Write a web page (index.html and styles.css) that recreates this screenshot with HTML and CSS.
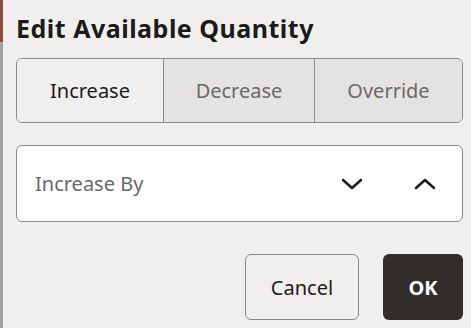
FILE: index.html
```html
<!DOCTYPE html>
<html>
<head>
<meta charset="utf-8">
<link rel="stylesheet" href="styles.css">
</head>
<body>
<div class="page">
  <div class="backdrop">
    <div class="bd-top"></div>
    <div class="bd-rest"></div>
  </div>
  <div class="dialog">
    <h1 class="title">Edit Available Quantity</h1>
    <div class="segmented">
      <button class="seg seg-on">Increase</button>
      <button class="seg">Decrease</button>
      <button class="seg">Override</button>
    </div>
    <div class="field">
      <span class="field-label">Increase By</span>
      <span class="steppers">
        <svg class="chev" width="22" height="14" viewBox="0 0 22 14"><path d="M2 3 L11 11 L20 3" fill="none" stroke="#1d1d1d" stroke-width="2.6" stroke-linecap="round" stroke-linejoin="round"/></svg>
        <svg class="chev" width="22" height="14" viewBox="0 0 22 14"><path d="M2 11 L11 3 L20 11" fill="none" stroke="#1d1d1d" stroke-width="2.6" stroke-linecap="round" stroke-linejoin="round"/></svg>
      </span>
    </div>
    <div class="actions">
      <button class="btn btn-cancel">Cancel</button>
      <button class="btn btn-ok">OK</button>
    </div>
  </div>
</div>
</body>
</html>
```

FILE: styles.css
```css
* { box-sizing: border-box; }
html, body { margin: 0; padding: 0; }
body {
  width: 471px;
  height: 328px;
  overflow: hidden;
  font-family: "Noto Sans", "Open Sans", sans-serif;
  background: #f1efed;
}
.page {
  display: flex;
  height: 328px;
}
.backdrop {
  width: 3px;
  display: flex;
  flex-direction: column;
}
.bd-top { height: 42px; background: #8a4a3c; }
.bd-rest { flex: 1; background: #a3a2a1; }
.dialog {
  flex: 1;
  background: #f1efed;
  padding: 12px 8px 0 13px;
  display: flex;
  flex-direction: column;
}
.title {
  margin: 0;
  font-size: 25px;
  font-weight: 700;
  color: #1b1b1b;
  line-height: 32px;
  letter-spacing: 0.5px;
}
.segmented {
  margin-top: 14px;
  display: flex;
  height: 65px;
  border: 1px solid #8c8b8a;
  border-radius: 6px;
  overflow: hidden;
}
.seg {
  font-family: inherit;
  font-size: 20px;
  border: none;
  background: #e4e3e1;
  color: #6a6967;
  margin: 0;
  padding: 0;
  flex: 0 0 auto;
}
.seg:nth-child(1) { width: 146px; }
.seg:nth-child(2) { width: 151px; border-left: 1px solid #8c8b8a; }
.seg:nth-child(3) { flex: 1; border-left: 1px solid #8c8b8a; }
.seg-on {
  background: #f1efed;
  color: #1b1b1b;
}
.field {
  margin-top: 22px;
  height: 77px;
  background: #ffffff;
  border: 1px solid #8c8b8a;
  border-radius: 6px;
  display: flex;
  align-items: center;
  padding: 0 26px 0 18px;
}
.field-label {
  flex: 1;
  font-size: 20px;
  color: #6a6967;
}
.steppers {
  display: flex;
  gap: 51px;
  align-items: center;
}
.chev { display: block; }
.actions {
  margin-top: 32px;
  display: flex;
  justify-content: flex-end;
  gap: 24px;
}
.btn {
  font-family: inherit;
  font-size: 20px;
  height: 66px;
  border-radius: 6px;
  margin: 0;
  padding: 0;
}
.btn-cancel {
  width: 114px;
  background: #f1efed;
  border: 1px solid #8c8b8a;
  color: #1b1b1b;
}
.btn-ok {
  width: 80px;
  background: #312d2a;
  border: none;
  color: #ffffff;
  font-weight: 700;
}
```
